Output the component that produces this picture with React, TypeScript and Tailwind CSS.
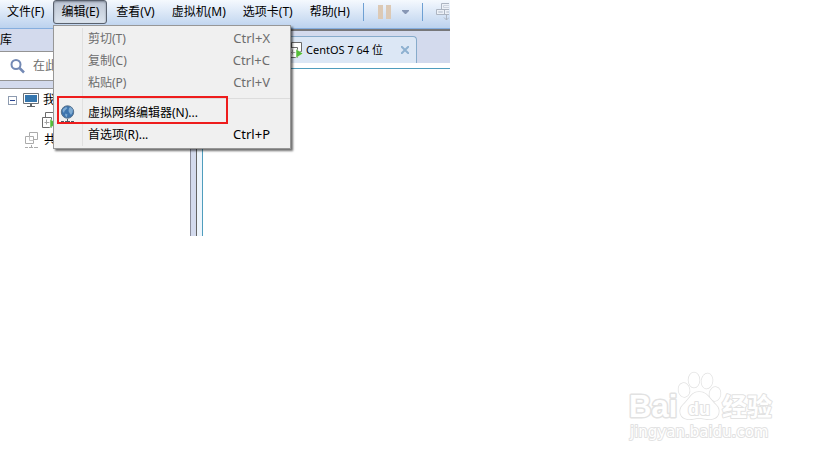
import { useState } from 'react';
import type { ReactNode } from 'react';

// ─── Data ─────────────────────────────────────────────────────────────────────

interface MenuEntry {
  label: string;
  shortcut?: string;
  disabled?: boolean;
}

const MENUS = ['文件(F)', '编辑(E)', '查看(V)', '虚拟机(M)', '选项卡(T)', '帮助(H)'];

const CLIPBOARD_ITEMS: MenuEntry[] = [
  { label: '剪切(T)', shortcut: 'Ctrl+X', disabled: true },
  { label: '复制(C)', shortcut: 'Ctrl+C', disabled: true },
  { label: '粘贴(P)', shortcut: 'Ctrl+V', disabled: true },
];

// ─── Icons ────────────────────────────────────────────────────────────────────

function SearchIcon() {
  return (
    <svg className="size-4 shrink-0" viewBox="0 0 16 16" fill="none" stroke="#7389b4">
      <circle cx="7" cy="6.5" r="4.5" strokeWidth="2" />
      <path d="M10.500 10l4.500 4.500" strokeWidth="2.5" />
    </svg>
  );
}

function MonitorIcon() {
  return (
    <svg className="size-4 shrink-0" viewBox="0 0 16 16">
      <path d="M.5 1.500h15v10H.5z" fill="#fff" stroke="#6d7278" />
      <path d="M2 3h12v7H2z" fill="#3576ae" />
      <path d="M7 12h2v2H7zM4 14h8v1H4z" fill="#5f6468" />
    </svg>
  );
}

/** Two stacked machines with a green play mark */
function RunningMachineIcon() {
  return (
    <svg className="size-4 shrink-0" viewBox="0 0 16 16">
      <g fill="#fff" stroke="#6b6b6b">
        <path d="M3.500.5h10v9h-10z" />
        <path d="M.5 5.500h9v10h-9z" />
        <path d="M4.500 7.500v5M2.500 10.500h5" stroke="#a3a3a3" />
      </g>
      <path d="M8 7l7 4.500L8 16z" fill="#54bd38" stroke="#fff" strokeWidth=".5" />
    </svg>
  );
}

/** Stacked machines on a network line */
function SharedMachinesIcon() {
  return (
    <svg className="size-4 shrink-0" viewBox="0 0 16 16">
      <g fill="#fff" stroke="#ababab">
        <path d="M5.500.5h8v7h-8z" />
        <path d="M1.500 4.500h8v7h-8z" />
        <path d="M5.500 4.500v4h4" fill="none" stroke="#c6c6c6" />
        <path d="M1 15.500h3M5 15.500h4M10 15.500h4M7.500 13v2" />
      </g>
    </svg>
  );
}

function GlobeIcon() {
  return (
    <svg className="h-5 w-4 shrink-0" viewBox="0 0 16 20">
      <circle cx="7.500" cy="9" r="6.200" fill="#3d74ae" stroke="#57718c" />
      <path d="M3 6l3-2 1.500 1L6 6.500 4.500 8 4 10 2.500 8zM9 5l1.500-1L13 6.500 12.500 9.500 11 12 9.500 10 8.500 8z" fill="#7fabd2" />
      <path d="M5.500 10.500l2 1-1 3L5 12z" fill="#7fabd2" />
      <path d="M7 16h1v2H7zM1 18h3v1H1zM5 18h5v1H5zM11 18h3v1h-3z" fill="#4c5964" />
    </svg>
  );
}

function SnapshotIcon() {
  return (
    <svg className="h-[18px] w-[13px] shrink-0" viewBox="0 0 13 18" fill="#edf1f7" stroke="#adb5c1">
      <path d="M5.500.5h9v6h-9zM.5 6.500h8v5h-8zM8.500 6.500h8v5h-8z" />
      <path d="M7.500 2.500h6v2h-6zM2.500 8.500h4v1h-4zM10.500 8.500h4v1h-4z" stroke="#cdd4df" />
      <path d="M10.500 12v5M8 14.500l2.500 2.500 2.500-2.500" fill="none" />
    </svg>
  );
}

// ─── Menu bar ─────────────────────────────────────────────────────────────────

function MenuBar({ open, onSelect }: { open: string | null; onSelect: (name: string) => void }) {
  return (
    <header className="flex h-[29px] items-start overflow-hidden border-b border-[#86aede] bg-linear-to-b from-[#f5f9fe] to-[#bcd2ee]">
      <nav className="-ml-px flex shrink-0 gap-px">
        {MENUS.map((name) => (
          <button
            key={name}
            type="button"
            aria-expanded={open === name}
            onClick={() => onSelect(name)}
            className={`h-6 rounded-[3px] border px-[7px] text-black ${
              open === name
                ? 'border-[#59616e] bg-linear-to-b from-[#bdc6d4] to-[#dce4ee] shadow-[inset_0_1px_2px_#7d8795]'
                : 'border-transparent'
            }`}
          >
            {name}
          </button>
        ))}
      </nav>
      <div className="ml-[5px] flex h-6 flex-1 items-center">
        <span className="h-[18px] w-px shrink-0 bg-[#6ea0d3]" />
        <button type="button" aria-label="暂停" className="ml-3.5 flex h-3.5 shrink-0 gap-[3px]">
          <span className="h-3.5 w-[5px] bg-[#dcc9b5]" />
          <span className="h-3.5 w-[5px] bg-[#dcc9b5]" />
        </button>
        <button type="button" aria-label="电源选项" className="ml-[11px] shrink-0">
          <svg className="h-1 w-[7px]" viewBox="0 0 7 4" fill="#8797b5">
            <path d="M0 0h7v1L4 4H3L0 1z" />
          </svg>
        </button>
        <span className="ml-[13px] h-[18px] w-px shrink-0 bg-[#6ea0d3]" />
        <button type="button" aria-label="快照" className="ml-[13px] shrink-0">
          <SnapshotIcon />
        </button>
      </div>
    </header>
  );
}

// ─── Edit menu ────────────────────────────────────────────────────────────────

function MenuRow({ entry, icon }: { entry: MenuEntry; icon?: ReactNode }) {
  return (
    <button
      type="button"
      role="menuitem"
      disabled={entry.disabled}
      className="flex h-[22px] w-full items-center pr-5 text-left text-black disabled:text-[#6d6d6d]"
    >
      <span className="flex w-[34px] shrink-0 pl-1.5">{icon}</span>
      <span className="flex-1 whitespace-nowrap">{entry.label}</span>
      {entry.shortcut && <span className="text-[13px]">{entry.shortcut}</span>}
    </button>
  );
}

function EditMenu() {
  return (
    <div
      role="menu"
      className="absolute top-[25px] left-[53px] z-10 w-[238px] border border-[#979797] bg-[#f0f0f0] py-0.5 shadow-[2px_2px_2px_#00000090]"
    >
      <div className="relative">
        <span className="absolute inset-y-0 left-7 w-px bg-[#e0e0e0]" />
        {CLIPBOARD_ITEMS.map((entry) => (
          <MenuRow key={entry.label} entry={entry} />
        ))}
        <div className="mt-1 mb-[3px] ml-7 border-t border-[#dcdcdc]" />
        <div className="relative">
          <MenuRow entry={{ label: '虚拟网络编辑器(N)...' }} icon={<GlobeIcon />} />
          <span className="absolute -top-1.5 left-[3px] h-7 w-[171px] border-2 border-[#ee1c1c]" />
        </div>
        <MenuRow entry={{ label: '首选项(R)...', shortcut: 'Ctrl+P' }} />
      </div>
    </div>
  );
}

// ─── Library sidebar ──────────────────────────────────────────────────────────

function Library() {
  return (
    <aside className="flex w-[191px] shrink-0 flex-col border-r border-[#8c8e9c] bg-white">
      <h2 className="h-[23px] border-b border-[#949494] bg-[#d3daed] leading-[21px]">库</h2>
      <label className="flex h-7 items-center gap-2 pl-[9px]">
        <SearchIcon />
        <input
          aria-label="搜索"
          placeholder="在此"
          className="w-full min-w-0 outline-none placeholder:text-[#6d6d6d]"
        />
      </label>
      <div className="h-[9px] border-y border-[#949494] bg-[#d3daed]" />
      <ul className="pt-px">
        <li className="flex h-5 items-center pl-2">
          <button type="button" aria-label="折叠" className="flex size-[9px] shrink-0 items-center justify-center border border-[#8d9bb0] bg-white">
            <span className="h-px w-[5px] bg-[#2a4590]" />
          </button>
          <span className="ml-1.5 flex items-center gap-1">
            <MonitorIcon />
            我
          </span>
        </li>
        <li className="flex h-5 items-center pl-[42px]">
          <RunningMachineIcon />
        </li>
        <li className="flex h-5 items-center gap-1 pl-6">
          <SharedMachinesIcon />
          共
        </li>
      </ul>
    </aside>
  );
}

// ─── Workspace ────────────────────────────────────────────────────────────────

function Workspace() {
  return (
    <main className="flex min-w-0 flex-1 flex-col border-l border-[#646464] bg-[#eef5fc]">
      <div className="flex h-[34px] items-end border-t-2 border-[#77777a] bg-[#d3daed] pl-[82px]">
        <div className="flex h-[27px] w-[138px] items-center rounded-tr-[4px] border border-b-0 border-[#87abcb] bg-[#dce7f5] pl-2 text-[11px]">
          <RunningMachineIcon />
          <span className="ml-0.5 flex-1 whitespace-nowrap">CentOS 7 64 位</span>
          <button type="button" aria-label="关闭选项卡" className="mr-[7px]">
            <svg className="size-2" viewBox="0 0 8 8" stroke="#8eb1d0" strokeWidth="2">
              <path d="M0 0l8 8M8 0L0 8" />
            </svg>
          </button>
        </div>
      </div>
      <div className="h-[5px] bg-white" />
      <div className="ml-[5px] flex-1 border-t border-l border-[#4f9dbd] bg-white" />
    </main>
  );
}

// ─── Watermark ────────────────────────────────────────────────────────────────

function Watermark() {
  return (
    <svg
      className="mt-auto mr-10 mb-4 h-[74px] w-[152px] self-end"
      viewBox="0 0 152 74"
      fill="#fff"
      stroke="#e2e2e2"
      strokeWidth="3"
      strokeLinejoin="round"
      paintOrder="stroke"
      fontFamily='"Liberation Sans", "Noto Sans CJK SC", sans-serif'
      fontWeight="700"
    >
      <text x="2" y="47" fontSize="31">Bai</text>
      <g strokeWidth="1.500">
        <ellipse cx="57" cy="20" rx="5.500" ry="7" transform="rotate(-12 57 20)" />
        <ellipse cx="67" cy="10" rx="5.500" ry="7.500" />
        <ellipse cx="80" cy="11" rx="5.500" ry="7.500" transform="rotate(8 80 11)" />
        <ellipse cx="88" cy="24" rx="5.500" ry="7" transform="rotate(12 88 24)" />
        <path d="M72 22C64 22 62 30 56 35c-5 5-3 13 4 14 5 1 7-1 12-1s8 2 13 1c7-1 9-9 4-14C83 30 81 22 72 22z" />
      </g>
      <text x="61" y="45" fontSize="18" strokeWidth="2">du</text>
      <text x="95" y="46" fontSize="25" strokeWidth="2">经验</text>
      <text x="3" y="67" fontSize="15" strokeWidth="2" fontWeight="400" fontFamily='"DejaVu Sans", sans-serif'>
        jingyan.baidu.com
      </text>
    </svg>
  );
}

// ─── Main export ──────────────────────────────────────────────────────────────

export default function App() {
  const [open, setOpen] = useState<string | null>('编辑(E)');

  return (
    <div className="flex min-h-screen flex-col bg-white font-['Noto_Sans','Noto_Sans_CJK_SC',sans-serif] text-xs text-black">
      <div className="relative flex w-full max-w-[450px] flex-col overflow-hidden">
        <MenuBar open={open} onSelect={(name) => setOpen(open === name ? null : name)} />
        <div className="flex min-h-[207px]">
          <Library />
          <div className="w-[5px] shrink-0 bg-[#d3daed]" />
          <Workspace />
        </div>
        {open === '编辑(E)' && <EditMenu />}
      </div>
      <Watermark />
    </div>
  );
}
